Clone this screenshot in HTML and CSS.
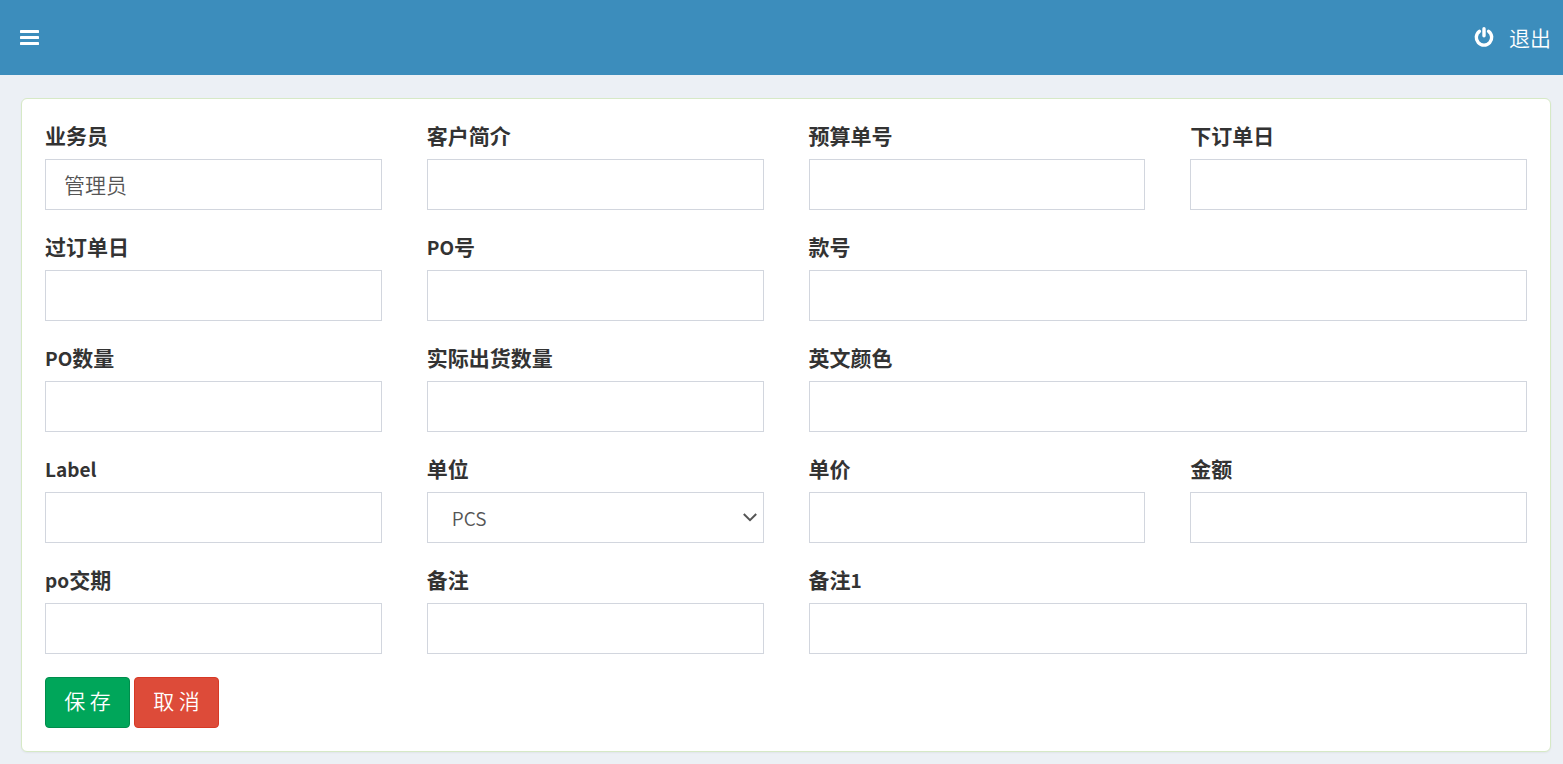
FILE: index.html
```html
<!DOCTYPE html>
<html lang="zh-CN">
<head>
<meta charset="utf-8">
<title>订单</title>
<link rel="stylesheet" href="styles.css">
</head>
<body>
<header class="navbar">
  <button class="nav-toggle" type="button" aria-label="菜单">
    <svg width="20" height="16" viewBox="0 0 20 16" fill="currentColor" aria-hidden="true"><rect y="0" width="19" height="3" rx=".4"/><rect y="6" width="19" height="3" rx=".4"/><rect y="12" width="19" height="3" rx=".4"/></svg>
  </button>
  <a class="logout" href="#">
    <svg width="20" height="20" viewBox="0 0 20 20" fill="none" stroke="currentColor" stroke-width="3.4" stroke-linecap="round" aria-hidden="true"><path d="M10 1.7V8.8M5.4 4.3A7.7 7.7 0 1 0 14.6 4.3"/></svg>
    <span>退出</span>
  </a>
</header>
<main class="content">
  <form class="panel">
    <div class="grid">
      <div class="field"><label for="f1">业务员</label><input id="f1" type="text" value="管理员"></div>
      <div class="field"><label for="f2">客户简介</label><input id="f2" type="text"></div>
      <div class="field"><label for="f3">预算单号</label><input id="f3" type="text"></div>
      <div class="field"><label for="f4">下订单日</label><input id="f4" type="text"></div>
      <div class="field"><label for="f5">过订单日</label><input id="f5" type="text"></div>
      <div class="field"><label for="f6"><span class="latin">PO</span>号</label><input id="f6" type="text"></div>
      <div class="field wide"><label for="f7">款号</label><input id="f7" type="text"></div>
      <div class="field"><label for="f8"><span class="latin">PO</span>数量</label><input id="f8" type="text"></div>
      <div class="field"><label for="f9">实际出货数量</label><input id="f9" type="text"></div>
      <div class="field wide"><label for="f10">英文颜色</label><input id="f10" type="text"></div>
      <div class="field"><label for="f11"><span class="latin">Label</span></label><input id="f11" type="text"></div>
      <div class="field"><label for="f12">单位</label>
        <div class="select-wrap">
          <select id="f12"><option>PCS</option></select>
          <svg class="chevron" width="16" height="10" viewBox="0 0 16 10" fill="none" stroke="currentColor" stroke-width="2" aria-hidden="true"><path d="M1.8 1L8 7.2L14.2 1"/></svg>
        </div>
      </div>
      <div class="field"><label for="f13">单价</label><input id="f13" type="text"></div>
      <div class="field"><label for="f14">金额</label><input id="f14" type="text"></div>
      <div class="field"><label for="f15"><span class="latin">po</span>交期</label><input id="f15" type="text"></div>
      <div class="field"><label for="f16">备注</label><input id="f16" type="text"></div>
      <div class="field wide"><label for="f17">备注<span class="latin">1</span></label><input id="f17" type="text"></div>
    </div>
    <div class="actions">
      <button class="btn save" type="submit">保 存</button>
      <button class="btn cancel" type="button">取 消</button>
    </div>
  </form>
</main>
</body>
</html>
```
FILE: styles.css
```css
* { box-sizing: border-box; }
body {
  margin: 0;
  min-height: 100vh;
  background: #ecf0f5;
  color: #333;
  font: 21px/30px "Noto Sans CJK SC", sans-serif;
}
.navbar {
  display: flex;
  justify-content: space-between;
  align-items: center;
  height: 75px;
  padding: 0 12px 0 20px;
  background: #3c8dbc;
  color: #fff;
}
.nav-toggle {
  display: flex;
  padding: 0;
  border: 0;
  background: none;
  color: inherit;
}
.logout {
  display: flex;
  align-items: center;
  gap: 15px;
  padding-bottom: 2px;
  color: inherit;
  font-weight: 350;
  text-decoration: none;
}
.content { padding: 23px 12px 12px 21px; }
.panel {
  padding: 23px;
  border: 1px solid #d6e9c6;
  border-radius: 6px;
  background: #fff;
  box-shadow: 0 1px 2px rgba(0, 0, 0, .05);
}
.grid {
  display: grid;
  grid-template-columns: repeat(4, minmax(0, 1fr));
  gap: 23px 45px;
}
.field { display: flex; flex-direction: column; gap: 11px; }
.wide { grid-column: span 2; }
.field label { font-weight: 700; line-height: 26px; }
.latin { font-size: 19px; line-height: 19px; }
.field input,
.field select {
  width: 100%;
  height: 51px;
  padding: 0 18px 2px;
  border: 1px solid #d2d6de;
  border-radius: 0;
  background: #fff;
  color: #555;
  font: inherit;
  font-weight: 350;
}
.select-wrap { display: grid; align-items: center; }
.select-wrap > * { grid-area: 1 / 1; }
.field select {
  padding: 0 45px 0 24px;
  font-size: 19px;
  appearance: none;
}
.chevron { justify-self: end; margin-right: 6px; color: #555; pointer-events: none; }
.actions { display: flex; gap: 4px; margin-top: 23px; }
.btn {
  min-width: 85px;
  height: 51px;
  padding: 0 17px 5px;
  border: 1px solid;
  border-radius: 4px;
  color: #fff;
  font: inherit;
  font-weight: 350;
}
.save { background: #00a65a; border-color: #008d4c; }
.cancel { background: #dd4b39; border-color: #d73925; }
```
